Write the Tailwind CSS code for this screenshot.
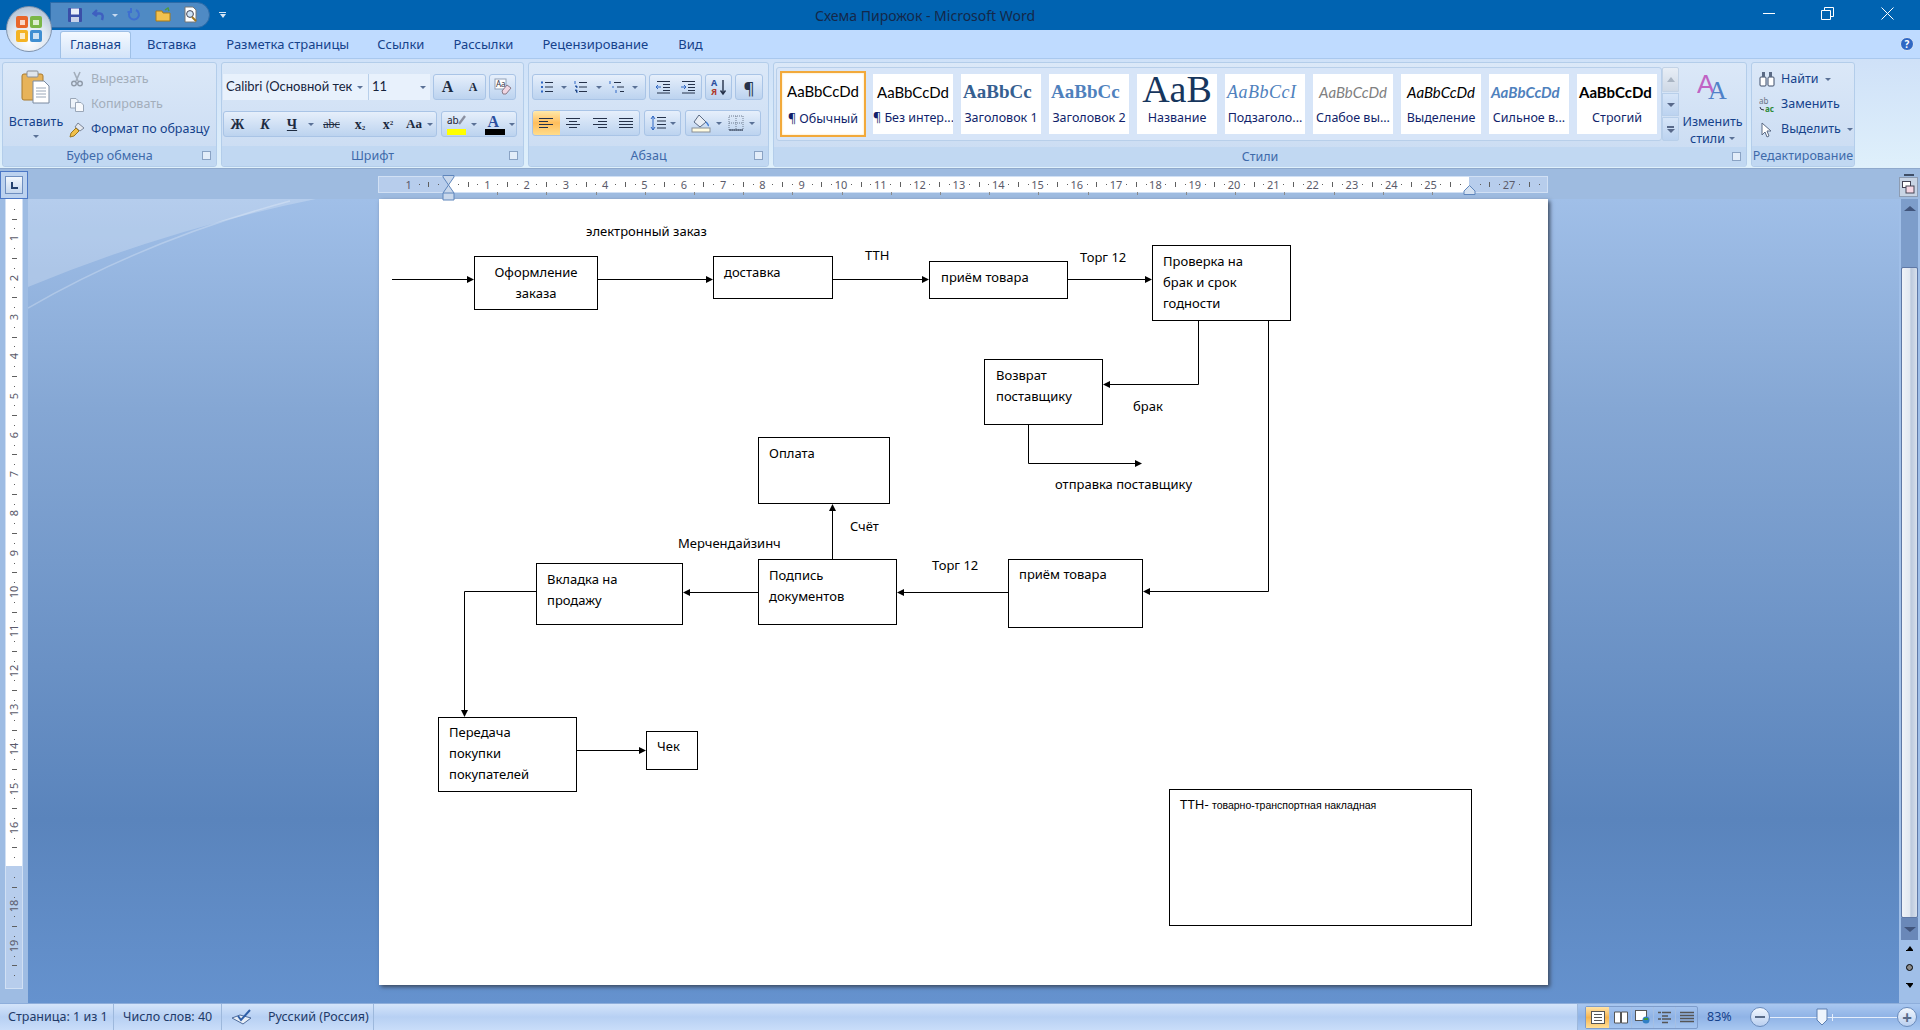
<!DOCTYPE html>
<html lang="ru">
<head>
  <title>Схема Пирожок - Microsoft Word</title>
  <meta charset="UTF-8" />
  <script src="https://cdn.jsdelivr.net/npm/@tailwindcss/browser@4"></script>
</head>
<body class="w-[1920px] h-[1030px] overflow-hidden font-['Noto_Sans',sans-serif] text-[12.5px] text-[#15428b] bg-[#bfdbff]">

  <!-- Office button -->
  <div class="absolute left-[6px] top-[6px] w-[46px] h-[46px] rounded-full border border-[#7f93ad] bg-[radial-gradient(circle_at_50%_75%,#ffffff_0,#dfe8f2_45%,#9fb1c6_100%)] flex items-center justify-center z-10">
    <svg width="30" height="30" viewBox="0 0 30 30">
      <rect x="2" y="2" width="12" height="12" rx="2" fill="#e8662a"/><rect x="16" y="2" width="12" height="12" rx="2" fill="#7ab648"/>
      <rect x="2" y="16" width="12" height="12" rx="2" fill="#f4b323"/><rect x="16" y="16" width="12" height="12" rx="2" fill="#3f8fd2"/>
      <rect x="6" y="6" width="5" height="5" fill="#fff" opacity=".75"/><rect x="19" y="6" width="6" height="5" fill="#fff" opacity=".75"/>
      <rect x="6" y="19" width="5" height="6" fill="#fff" opacity=".75"/><rect x="19" y="19" width="6" height="6" fill="#fff" opacity=".75"/>
    </svg>
  </div>

  <!-- Title bar -->
  <div class="h-[30px] bg-[#0063b1] flex items-start">
    <div class="ml-[50px] mt-[2px] w-[160px] h-[26px] rounded-r-[13px] bg-[#4f8ac4] border border-[#2d6ba8] flex items-center pl-[16px] gap-[9px]">
      <svg width="16" height="16" viewBox="0 0 16 16"><rect x="1" y="1" width="14" height="14" rx="1" fill="#3a4fa8"/><rect x="4" y="1.5" width="8" height="6" fill="#e9eef8"/><rect x="4" y="10" width="8" height="5" fill="#c8d2e8"/></svg>
      <svg width="14" height="16" viewBox="0 0 14 16"><path d="M5 3 L1.5 6.5 L5 9 M2 6.5 H8 Q12 7 10 13" fill="none" stroke="#3e5fc0" stroke-width="2.4"/></svg>
      <span class="w-0 h-0 border-x-[3px] border-x-transparent border-t-[3px] border-t-[#c6d9ef] -ml-[3px]"></span>
      <svg width="14" height="16" viewBox="0 0 14 16"><path d="M9 3 A5 5 0 1 1 4 3.5 M4 1 V5 H0.5" fill="none" stroke="#3e6fd0" stroke-width="2"/></svg>
      <svg class="ml-[5px]" width="18" height="16" viewBox="0 0 18 16"><path d="M1 4 H7 L8 6 H15 V14 H1Z" fill="#f2c24f" stroke="#a87a1b"/><path d="M10 3 L13 1 L14 4" fill="none" stroke="#4f9a3c" stroke-width="1.4"/></svg>
      <svg class="ml-[1px]" width="16" height="18" viewBox="0 0 16 18"><path d="M2 1 H10 L13 4 V16 H2Z" fill="#fff" stroke="#777"/><circle cx="7" cy="8" r="3.4" fill="#cfe4f7" stroke="#445"/><path d="M9 11 L13 15" stroke="#a0761c" stroke-width="2"/></svg>
    </div>
    <div class="ml-[9px] mt-[12px] flex flex-col items-center gap-[1px]">
      <span class="w-[7px] h-px bg-[#d8e6f5]"></span>
      <span class="w-0 h-0 border-x-[3.5px] border-x-transparent border-t-[4px] border-t-[#d8e6f5]"></span>
    </div>
    <div class="ml-[589px] mt-[5px] text-[14px] leading-[22px] text-[#14284a] whitespace-nowrap">Схема Пирожок - Microsoft Word</div>
    <div class="ml-auto flex items-center h-[26px] text-white">
      <svg class="mr-[46px]" width="12" height="12" viewBox="0 0 12 12"><path d="M0 6.5 H12" stroke="#fff"/></svg>
      <svg class="mr-[47px]" width="13" height="13" viewBox="0 0 13 13"><path d="M.5 3.5 H9.5 V12.5 H.5Z M3.5 3.5 V.5 H12.5 V9.5 H9.5" fill="none" stroke="#fff"/></svg>
      <svg class="mr-[26px]" width="13" height="13" viewBox="0 0 13 13"><path d="M.5 .5 L12.5 12.5 M12.5 .5 L.5 12.5" stroke="#fff"/></svg>
    </div>
  </div>

  <!-- Tabs -->
  <div class="h-[28px] bg-[#bfdbff] flex items-end relative">
    <div class="ml-[60px] w-[71px] h-[27px] rounded-t-[3px] border border-b-0 border-[#9fc0e6] bg-linear-to-b from-[#f4f9ff] to-[#d3e4f9] flex items-center justify-center text-[13px]">Главная</div>
    <div class="ml-[16px] h-[27px] leading-[27px] text-[13px]">Вставка</div>
    <div class="ml-[30px] h-[27px] leading-[27px] text-[13px]">Разметка страницы</div>
    <div class="ml-[28px] h-[27px] leading-[27px] text-[13px]">Ссылки</div>
    <div class="ml-[29px] h-[27px] leading-[27px] text-[13px]">Рассылки</div>
    <div class="ml-[29px] h-[27px] leading-[27px] text-[13px]">Рецензирование</div>
    <div class="ml-[30px] h-[27px] leading-[27px] text-[13px]">Вид</div>
    <div class="ml-auto mr-[6px] mb-[7px] w-[14px] h-[14px] rounded-full bg-[#2f67c4] border border-[#d9e6f6] text-white text-[10px] leading-[12px] font-bold text-center">?</div>
  </div>

  <!-- Ribbon -->
  <div class="h-[110px] pt-[3px] pl-[2px] flex items-start gap-[4px] bg-linear-to-b from-[#cfe1f8] to-[#dff0fb] border-t border-[#a9c8ee]">

    <!-- Clipboard -->
    <div class="w-[215px] h-[105px] rounded-[3px] border border-[#b3cdea] flex flex-col bg-linear-to-b from-[#dbe8f8] to-[#c9dbf2]">
      <div class="h-[84px] flex">
        <div class="w-[66px] flex flex-col items-center pt-[7px]">
          <svg width="30" height="34" viewBox="0 0 30 34">
            <rect x="1" y="4" width="21" height="26" rx="2" fill="#e7b35a" stroke="#a97a2c"/>
            <rect x="6" y="1" width="11" height="6" rx="1" fill="#dfe5ec" stroke="#8a8f96"/>
            <path d="M12 11 H23 L28 16 V33 H12Z" fill="#fff" stroke="#7a8aa0"/>
            <path d="M15 18 H25 M15 21 H25 M15 24 H25 M15 27 H25" stroke="#9aa7b8"/>
          </svg>
          <div class="mt-[9px] leading-[18px]">Вставить</div>
          <span class="mt-[4px] w-0 h-0 border-x-[3px] border-x-transparent border-t-[3px] border-t-[#5a7196]"></span>
        </div>
        <div class="flex flex-col pt-[3px]">
          <div class="h-[26px] flex items-center gap-[6px] text-[#a3aebb]">
            <svg width="16" height="16" viewBox="0 0 16 16"><path d="M5 1 L9 10 M11 1 L7 10" stroke="#a3aebb" stroke-width="1.6"/><circle cx="5" cy="12.5" r="2.3" fill="none" stroke="#8f9aa8" stroke-width="1.4"/><circle cx="11" cy="12.5" r="2.3" fill="none" stroke="#8f9aa8" stroke-width="1.4"/></svg>Вырезать
          </div>
          <div class="h-[25px] flex items-center gap-[6px] text-[#a3aebb]">
            <svg width="16" height="16" viewBox="0 0 16 16"><path d="M1.5 1.5 H7 L9 3.5 V11 H1.5Z" fill="#eef3f9" stroke="#9aa7b8"/><path d="M6.5 5.5 H12 L14.5 8 V14.5 H6.5Z" fill="#f7f9fc" stroke="#9aa7b8"/></svg>Копировать
          </div>
          <div class="h-[25px] flex items-center gap-[6px] whitespace-nowrap">
            <svg width="16" height="16" viewBox="0 0 16 16"><path d="M9 1 L15 6 L11 9 L6 5Z" fill="#e3e7ee" stroke="#7b8698"/><path d="M7 6 L2 11 L1 15 L5 14 L10 9Z" fill="#f0c04a" stroke="#9a7621"/></svg>Формат по образцу
          </div>
        </div>
      </div>
      <div class="h-[20px] relative bg-[#c1d8f2] rounded-b-[3px] text-center text-[#3e6aaa] leading-[20px]">Буфер обмена
        <span class="absolute right-[5px] top-[5px] w-[9px] h-[9px] border border-[#8aa3c4] bg-[#e3edf9]"></span>
      </div>
    </div>

    <!-- Font -->
    <div class="w-[303px] h-[105px] rounded-[3px] border border-[#b3cdea] flex flex-col bg-linear-to-b from-[#dbe8f8] to-[#c9dbf2]">
      <div class="h-[84px] pl-[1px] pt-[11px] flex flex-col gap-[11px]">
        <div class="flex h-[26px] items-stretch">
          <div class="w-[146px] bg-[#e8f1fc] border-r border-[#b8cfea] pl-[3px] flex items-center justify-between pr-[5px] text-[#16243c] font-['Lato'] text-[13px] whitespace-nowrap overflow-hidden">Calibri (Основной тек<span class="w-0 h-0 shrink-0 border-x-[3px] border-x-transparent border-t-[3px] border-t-[#5a7196]"></span></div>
          <div class="w-[61px] bg-[#e8f1fc] pl-[3px] pr-[4px] flex items-center justify-between text-[#16243c] font-['Lato'] text-[13px]">11<span class="w-0 h-0 border-x-[3px] border-x-transparent border-t-[3px] border-t-[#5a7196]"></span></div>
          <div class="ml-[3px] w-[53px] rounded-[3px] border border-[#a9c4e6] bg-linear-to-b from-[#e6effb] to-[#bcd3ef] flex items-center justify-around font-['Liberation_Serif'] font-bold text-[#1d2b40]"><span class="text-[16px]">A</span><span class="text-[12px]">A</span></div>
          <div class="ml-[3px] w-[27px] rounded-[3px] border border-[#a9c4e6] bg-linear-to-b from-[#e6effb] to-[#bcd3ef] flex items-center justify-center">
            <svg width="18" height="18" viewBox="0 0 18 18"><rect x="1" y="1" width="11" height="10" fill="#fff" stroke="#8fa0b8"/><text x="2" y="9" font-size="8" fill="#334">Aa</text><path d="M8 13 L13 7 L17 10 L12 16 H9Z" fill="#f2d6e2" stroke="#8a7a88"/></svg>
          </div>
        </div>
        <div class="flex h-[26px]">
          <div class="w-[214px] rounded-[3px] border border-[#a9c4e6] bg-linear-to-b from-[#e6effb] to-[#bcd3ef] flex items-center text-[#1d2b40] font-['Liberation_Serif'] font-bold text-[14px]">
            <span class="w-[27px] text-center">Ж</span><span class="w-[28px] text-center italic">К</span><span class="w-[26px] text-center underline">Ч</span>
            <span class="w-[12px] flex justify-center"><span class="w-0 h-0 border-x-[3px] border-x-transparent border-t-[3px] border-t-[#5a7196]"></span></span>
            <span class="w-[29px] text-center text-[12px] font-normal line-through">abc</span>
            <span class="w-[28px] text-center">x<sub class="text-[7px]">2</sub></span><span class="w-[28px] text-center">x<sup class="text-[7px]">2</sup></span>
            <span class="w-[24px] text-center text-[13px]">Aa</span>
            <span class="w-[8px] flex justify-center"><span class="w-0 h-0 border-x-[3px] border-x-transparent border-t-[3px] border-t-[#5a7196]"></span></span>
          </div>
          <div class="ml-[4px] w-[76px] rounded-[3px] border border-[#a9c4e6] bg-linear-to-b from-[#e6effb] to-[#bcd3ef] flex items-center pl-[4px]">
            <svg width="22" height="23" viewBox="0 0 22 23"><text x="1" y="11" font-size="10" fill="#223">ab</text><path d="M13 11 L19 3" stroke="#8a8fa0" stroke-width="2.4"/><rect x="1" y="16" width="19" height="6" fill="#ffff00"/></svg>
            <span class="ml-[3px] w-0 h-0 border-x-[3px] border-x-transparent border-t-[3px] border-t-[#5a7196]"></span>
            <svg class="ml-[7px]" width="22" height="23" viewBox="0 0 22 23"><text x="3.5" y="14" font-size="16" font-weight="700" fill="#2b4f9e" font-family="Liberation Serif">A</text><rect x="1" y="16" width="20" height="6" fill="#000"/></svg>
            <span class="ml-[3px] w-0 h-0 border-x-[3px] border-x-transparent border-t-[3px] border-t-[#5a7196]"></span>
          </div>
        </div>
      </div>
      <div class="h-[20px] relative bg-[#c1d8f2] rounded-b-[3px] text-center text-[#3e6aaa] leading-[20px]">Шрифт
        <span class="absolute right-[5px] top-[5px] w-[9px] h-[9px] border border-[#8aa3c4] bg-[#e3edf9]"></span>
      </div>
    </div>

    <!-- Paragraph -->
    <div class="w-[241px] h-[105px] rounded-[3px] border border-[#b3cdea] flex flex-col bg-linear-to-b from-[#dbe8f8] to-[#c9dbf2]">
      <div class="h-[84px] pl-[3px] pt-[11px] flex flex-col gap-[10px]">
        <div class="flex h-[26px] gap-[3px]">
          <div class="w-[114px] rounded-[3px] border border-[#a9c4e6] bg-linear-to-b from-[#e6effb] to-[#bcd3ef] flex items-center justify-around px-[3px]">
            <svg width="14" height="14" viewBox="0 0 14 14"><path d="M5 2.5 H13 M5 7 H13 M5 11.5 H13" stroke="#25324a"/><path d="M1 2.5 H3 M1 7 H3 M1 11.5 H3" stroke="#2f67c4" stroke-width="2"/></svg>
            <span class="w-0 h-0 border-x-[3px] border-x-transparent border-t-[3px] border-t-[#5a7196]"></span>
            <svg width="14" height="14" viewBox="0 0 14 14"><path d="M5 2.5 H13 M5 7 H13 M5 11.5 H13" stroke="#25324a"/><path d="M1 1 V4 M1 6 H3 V8 M1 10 H3 V13" stroke="#2f67c4"/></svg>
            <span class="w-0 h-0 border-x-[3px] border-x-transparent border-t-[3px] border-t-[#5a7196]"></span>
            <svg width="16" height="14" viewBox="0 0 16 14"><path d="M5 2.5 H12 M8 7 H15 M11 11.5 H15" stroke="#25324a"/><path d="M1 1 V4 M4 6 V8 M7 10 V13" stroke="#2f67c4"/></svg>
            <span class="w-0 h-0 border-x-[3px] border-x-transparent border-t-[3px] border-t-[#5a7196]"></span>
          </div>
          <div class="w-[53px] rounded-[3px] border border-[#a9c4e6] bg-linear-to-b from-[#e6effb] to-[#bcd3ef] flex items-center justify-around">
            <svg width="16" height="14" viewBox="0 0 16 14"><path d="M2 1.5 H15 M8 4.5 H15 M8 7.5 H15 M8 10.5 H15 M2 13 H15" stroke="#25324a"/><path d="M6 7 H1 M3 5 L1 7 L3 9" fill="none" stroke="#2f67c4"/></svg>
            <svg width="16" height="14" viewBox="0 0 16 14"><path d="M2 1.5 H15 M8 4.5 H15 M8 7.5 H15 M8 10.5 H15 M2 13 H15" stroke="#25324a"/><path d="M1 7 H6 M4 5 L6 7 L4 9" fill="none" stroke="#2f67c4"/></svg>
          </div>
          <div class="w-[27px] rounded-[3px] border border-[#a9c4e6] bg-linear-to-b from-[#e6effb] to-[#bcd3ef] flex items-center justify-center">
            <svg width="18" height="18" viewBox="0 0 18 18"><text x="1" y="8" font-size="9" font-weight="700" fill="#2b4f9e">А</text><text x="1" y="17" font-size="9" font-weight="700" fill="#b03a2e">Я</text><path d="M13 2 V15 M10.5 12.5 L13 16 L15.5 12.5" fill="none" stroke="#25324a" stroke-width="1.4"/></svg>
          </div>
          <div class="w-[28px] rounded-[3px] border border-[#a9c4e6] bg-linear-to-b from-[#e6effb] to-[#bcd3ef] flex items-center justify-center text-[17px] leading-none text-[#25324a]">¶</div>
        </div>
        <div class="flex h-[26px] gap-[4px]">
          <div class="w-[108px] rounded-[3px] border border-[#a9c4e6] bg-linear-to-b from-[#e6effb] to-[#bcd3ef] flex items-stretch">
            <div class="w-[27px] rounded-l-[3px] bg-linear-to-b from-[#ffe9a8] via-[#ffbe5c] to-[#ffdc8a] flex items-center justify-center"><svg width="14" height="13" viewBox="0 0 14 13"><path d="M0 1.5 H14 M0 4.5 H9 M0 7.5 H14 M0 10.5 H9" stroke="#25324a"/></svg></div>
            <div class="w-[27px] flex items-center justify-center"><svg width="14" height="13" viewBox="0 0 14 13"><path d="M0 1.5 H14 M3 4.5 H11 M0 7.5 H14 M3 10.5 H11" stroke="#25324a"/></svg></div>
            <div class="w-[27px] flex items-center justify-center"><svg width="14" height="13" viewBox="0 0 14 13"><path d="M0 1.5 H14 M5 4.5 H14 M0 7.5 H14 M5 10.5 H14" stroke="#25324a"/></svg></div>
            <div class="w-[26px] flex items-center justify-center"><svg width="14" height="13" viewBox="0 0 14 13"><path d="M0 1.5 H14 M0 4.5 H14 M0 7.5 H14 M0 10.5 H14" stroke="#25324a"/></svg></div>
          </div>
          <div class="w-[37px] rounded-[3px] border border-[#a9c4e6] bg-linear-to-b from-[#e6effb] to-[#bcd3ef] flex items-center justify-center gap-[3px]">
            <svg width="17" height="16" viewBox="0 0 17 16"><path d="M7 2.5 H16 M7 6 H16 M7 9.5 H16 M7 13 H16" stroke="#25324a"/><path d="M3 1 V15 M1 4 L3 1 L5 4 M1 12 L3 15 L5 12" fill="none" stroke="#2f67c4"/></svg>
            <span class="w-0 h-0 border-x-[3px] border-x-transparent border-t-[3px] border-t-[#5a7196]"></span>
          </div>
          <div class="w-[76px] rounded-[3px] border border-[#a9c4e6] bg-linear-to-b from-[#e6effb] to-[#bcd3ef] flex items-center justify-around px-[2px]">
            <svg width="20" height="20" viewBox="0 0 20 20"><path d="M8 2 L15 9 L9 14 L3 9Z" fill="#e9eef5" stroke="#5a6a84"/><path d="M15 9 Q18 12 17 13" fill="none" stroke="#3e79d0" stroke-width="1.5"/><rect x="1" y="15" width="18" height="4" fill="#fffbe0" stroke="#8a8f96"/></svg>
            <span class="w-0 h-0 border-x-[3px] border-x-transparent border-t-[3px] border-t-[#5a7196]"></span>
            <svg width="16" height="16" viewBox="0 0 16 16"><path d="M1 1 H15 V15 H1Z M8 1 V15 M1 8 H15" fill="none" stroke="#6f7c90" stroke-dasharray="1 1"/><path d="M1 15 H15" stroke="#25324a"/></svg>
            <span class="w-0 h-0 border-x-[3px] border-x-transparent border-t-[3px] border-t-[#5a7196]"></span>
          </div>
        </div>
      </div>
      <div class="h-[20px] relative bg-[#c1d8f2] rounded-b-[3px] text-center text-[#3e6aaa] leading-[20px]">Абзац
        <span class="absolute right-[5px] top-[5px] w-[9px] h-[9px] border border-[#8aa3c4] bg-[#e3edf9]"></span>
      </div>
    </div>

    <!-- Styles -->
    <div class="w-[974px] h-[105px] rounded-[3px] border border-[#b3cdea] flex flex-col bg-linear-to-b from-[#dbe8f8] to-[#c9dbf2]">
      <div class="h-[84px] flex pl-[2px] pt-[4px]">
        <div class="w-[886px] h-[74px] flex gap-[8px] rounded-[3px] border border-[#b8cfea] bg-[#d7e5f8] pl-[3px] pt-[6px] text-center leading-[16px] text-[#111f6b] text-[12.5px] whitespace-nowrap">
          <div class="w-[86px] h-[66px] -mt-[3px] -mr-[3px] bg-white border-2 border-[#f2a93b] shadow-[inset_0_0_2px_#ffd98a] flex flex-col overflow-hidden">
            <span class="h-[38px] leading-[36px] text-black font-['Lato'] text-[15px]">AaBbCcDd</span><span>¶ Обычный</span>
          </div>
          <div class="w-[80px] h-[60px] ml-[2px] bg-white flex flex-col overflow-hidden">
            <span class="h-[36px] leading-[36px] text-black font-['Lato'] text-[15px]">AaBbCcDd</span><span>¶ Без интер...</span>
          </div>
          <div class="w-[80px] h-[60px] bg-white flex flex-col overflow-hidden">
            <span class="h-[36px] leading-[36px] text-left pl-[2px] text-[#365f91] font-['Liberation_Serif'] font-bold text-[19px]">AaBbCc</span><span>Заголовок 1</span>
          </div>
          <div class="w-[80px] h-[60px] bg-white flex flex-col overflow-hidden">
            <span class="h-[36px] leading-[36px] text-left pl-[2px] text-[#4f81bd] font-['Liberation_Serif'] font-bold text-[19px]">AaBbCc</span><span>Заголовок 2</span>
          </div>
          <div class="w-[80px] h-[60px] bg-white flex flex-col overflow-hidden">
            <span class="h-[36px] leading-[30px] text-[#17365d] font-['Liberation_Serif'] text-[38px]">AaB</span><span>Название</span>
          </div>
          <div class="w-[80px] h-[60px] bg-white flex flex-col overflow-hidden">
            <span class="h-[36px] leading-[36px] text-left pl-[2px] text-[#4f81bd] font-['Liberation_Serif'] italic text-[18px] tracking-[.5px]">AaBbCcI</span><span>Подзаголо...</span>
          </div>
          <div class="w-[80px] h-[60px] bg-white flex flex-col overflow-hidden">
            <span class="h-[36px] leading-[36px] text-[#808080] font-['Lato'] italic text-[15px]">AaBbCcDd</span><span>Слабое вы...</span>
          </div>
          <div class="w-[80px] h-[60px] bg-white flex flex-col overflow-hidden">
            <span class="h-[36px] leading-[36px] text-black font-['Lato'] italic text-[15px]">AaBbCcDd</span><span>Выделение</span>
          </div>
          <div class="w-[80px] h-[60px] bg-white flex flex-col overflow-hidden">
            <span class="h-[36px] leading-[36px] text-left pl-[2px] text-[#4f81bd] font-['Lato'] italic font-bold text-[15px]">AaBbCcDd</span><span>Сильное в...</span>
          </div>
          <div class="w-[80px] h-[60px] bg-white flex flex-col overflow-hidden">
            <span class="h-[36px] leading-[36px] text-left pl-[2px] text-black font-['Lato'] font-bold text-[15px]">AaBbCcDd</span><span>Строгий</span>
          </div>
        </div>
        <div class="w-[17px] h-[74px] flex flex-col gap-[1px]">
          <div class="h-[25px] rounded-t-[2px] border border-[#c3d3e6] bg-linear-to-b from-[#e8eef6] to-[#cfd9e6] flex items-center justify-center"><span class="w-0 h-0 border-x-[4px] border-x-transparent border-b-[5px] border-b-[#a9b4c2]"></span></div>
          <div class="h-[23px] border border-[#b8cfea] bg-linear-to-b from-[#d6e5f8] to-[#bcd3f0] flex items-center justify-center"><span class="w-0 h-0 border-x-[4px] border-x-transparent border-t-[4px] border-t-[#58698a]"></span></div>
          <div class="h-[24px] rounded-b-[2px] border border-[#b8cfea] bg-linear-to-b from-[#d6e5f8] to-[#bcd3f0] flex flex-col gap-[1px] items-center justify-center"><span class="w-[7px] h-[2px] bg-[#58698a]"></span><span class="w-0 h-0 border-x-[4px] border-x-transparent border-t-[4px] border-t-[#58698a]"></span></div>
        </div>
        <div class="flex-1 flex flex-col items-center pt-[4px] leading-[17px]">
          <svg width="32" height="32" viewBox="0 0 32 32">
            <text x="0" y="22" font-size="26" font-family="Liberation Sans" fill="#c063c4">A</text>
            <text x="11" y="28" font-size="26" font-family="Liberation Serif" fill="#4f81c8">A</text>
          </svg>
          <div class="mt-[10px]">Изменить</div>
          <div class="flex items-center gap-[4px]">стили<span class="w-0 h-0 border-x-[3px] border-x-transparent border-t-[3px] border-t-[#5a7196]"></span></div>
        </div>
      </div>
      <div class="h-[20px] relative bg-[#c1d8f2] rounded-b-[3px] text-center text-[#3e6aaa] leading-[20px]">Стили
        <span class="absolute right-[5px] top-[5px] w-[9px] h-[9px] border border-[#8aa3c4] bg-[#e3edf9]"></span>
      </div>
    </div>

    <!-- Editing -->
    <div class="w-[104px] h-[105px] rounded-[3px] border border-[#b3cdea] flex flex-col bg-linear-to-b from-[#dbe8f8] to-[#c9dbf2]">
      <div class="h-[84px] pl-[7px] pt-[3px] flex flex-col">
        <div class="h-[26px] flex items-center gap-[6px] text-[#15428b]">
          <svg width="16" height="16" viewBox="0 0 16 16"><rect x="1" y="6" width="6" height="9" rx="1" fill="#fff" stroke="#3d4d68"/><rect x="9" y="6" width="6" height="9" rx="1" fill="#fff" stroke="#3d4d68"/><rect x="3" y="1" width="3" height="5" fill="#5a6a84"/><rect x="10" y="1" width="3" height="5" fill="#5a6a84"/></svg>Найти
          <span class="w-0 h-0 border-x-[3px] border-x-transparent border-t-[3px] border-t-[#5a7196]"></span>
        </div>
        <div class="h-[25px] flex items-center gap-[6px]">
          <svg width="16" height="16" viewBox="0 0 16 16"><text x="0" y="7" font-size="8" fill="#6a7484">ab</text><text x="6" y="15" font-size="8" font-weight="700" fill="#2e8b3a">ac</text><path d="M1 10 Q1 13 5 13" fill="none" stroke="#334"/></svg>Заменить
        </div>
        <div class="h-[25px] flex items-center gap-[6px]">
          <svg width="16" height="16" viewBox="0 0 16 16"><path d="M3 1 V13 L6 10 L8 15 L10 14 L8 9 H12Z" fill="#fff" stroke="#5a6a84"/></svg>Выделить
          <span class="w-0 h-0 border-x-[3px] border-x-transparent border-t-[3px] border-t-[#5a7196]"></span>
        </div>
      </div>
      <div class="h-[20px] bg-[#c1d8f2] rounded-b-[3px] text-center text-[#3e6aaa] leading-[20px] whitespace-nowrap">Редактирование</div>
    </div>
  </div>

  <!-- Ruler row -->
  <div class="h-[31px] bg-[#9ebbe0] flex items-start border-t border-[#8fa9cc]">
    <div class="w-[28px] h-[28px] mt-[2px] border border-[#4c78c6] bg-[#bcd2ef] flex items-center justify-center">
      <span class="w-[18px] h-[18px] bg-linear-to-b from-[#f4f8fd] to-[#c5d7ee] border border-[#6f8fc0] flex items-center justify-center"><span class="w-[7px] h-[7px] border-l-2 border-b-2 border-[#26426e]"></span></span>
    </div>
    <div id="hruler" class="relative ml-[350px] mt-[7px] w-[1170px] h-[17px] bg-[#b7cdec] border border-[#d1e0f4]">
      <div class="absolute left-[69px] top-0 w-[1021px] h-full bg-white"></div>
      <!-- margin sliders -->
      <svg class="absolute left-[63px] -top-[2px] z-10" width="13" height="26" viewBox="0 0 13 26"><path d="M1 .5 H12 V2 L6.5 10 L1 2Z M6.5 10 L12 18 V25 H1 V18Z" fill="#c9d8ec" stroke="#5f86bc"/><path d="M1 18 H12" stroke="#5f86bc"/></svg>
      <svg class="absolute left-[1084px] top-[8px] z-10" width="13" height="10" viewBox="0 0 13 10"><path d="M6.5 .5 L12 6 V9.5 H1 V6Z" fill="#d5e2f2" stroke="#5f86bc"/></svg>
    </div>
    <div class="ml-auto w-[21px] relative h-full">
      <span class="absolute left-[5px] top-[5px] w-[10px] h-[2px] bg-[#3f4e66]"></span>
      <div class="absolute left-0 top-[8px] w-[19px] h-[20px] bg-[#c8d4e4] border border-[#8d9cb2] flex items-center justify-center">
        <svg width="13" height="13" viewBox="0 0 13 13"><rect x=".5" y=".5" width="8" height="6" fill="#fff" stroke="#445"/><rect x="4" y="5" width="8" height="7" fill="#f6d8e4" stroke="#445"/></svg>
      </div>
    </div>
  </div>

  <!-- Document area -->
  <div class="h-[804px] flex">
    <div class="w-[28px] bg-[#9ebce3] pl-[5px]">
      <div id="vruler" class="relative w-[18px] h-[790px] bg-[#b7cdec] border-x border-b border-[#d1e0f4]">
        <div class="absolute left-0 top-0 w-full h-[667px] bg-white"></div>
      </div>
    </div>

    <div class="relative flex-1 bg-[linear-gradient(180deg,#a0bfe8_0,#85a7d4_210px,#5a84bc_620px,#6592ce_100%)]">
      <svg class="absolute left-0 top-0" width="300" height="120" viewBox="0 0 300 120">
        <path d="M0 88 Q140 30 288 0 H0Z" fill="#fff" fill-opacity=".22"/>
        <path d="M0 109 Q120 40 262 2" fill="none" stroke="#fff" stroke-opacity=".25" stroke-width="1.5"/>
      </svg>

      <!-- Page with the diagram -->
      <div class="absolute left-[351px] top-0 w-[1169px] h-[786px] bg-white shadow-[2px_2px_4px_#3c4a60] text-[13px] leading-[21px] text-black">
        <svg class="absolute inset-0" width="1169" height="786" viewBox="0 0 1169 786">
          <g fill="none" stroke="#000">
            <path d="M13 80.5 H90"/><path d="M219 80.5 H329"/><path d="M454 80.5 H545"/><path d="M689 80.5 H768"/>
            <path d="M819.5 122 V185.5 H729"/><path d="M649.5 226 V264.5 H758"/><path d="M889.5 122 V392.5 H770"/>
            <path d="M629 393.5 H523"/><path d="M379 393.5 H309"/><path d="M157 392.5 H85.5 V513"/><path d="M198 551.5 H262"/>
            <path d="M453.5 360 V310"/>
          </g>
          <g fill="#000">
            <path d="M95 80.5 l-7 -3.5 v7Z"/><path d="M334 80.5 l-7 -3.5 v7Z"/><path d="M550 80.5 l-7 -3.5 v7Z"/><path d="M773 80.5 l-7 -3.5 v7Z"/>
            <path d="M724 185.5 l7 -3.5 v7Z"/><path d="M763 264.5 l-7 -3.5 v7Z"/><path d="M764 392.5 l7 -3.5 v7Z"/>
            <path d="M518 393.5 l7 -3.5 v7Z"/><path d="M304 393.5 l7 -3.5 v7Z"/><path d="M85.5 518 l-3.5 -7 h7Z"/><path d="M267 551.5 l-7 -3.5 v7Z"/>
            <path d="M453.5 305 l-3.5 7 h7Z"/>
          </g>
        </svg>

        <div class="absolute left-[95px] top-[57px] w-[124px] h-[54px] border border-black pt-[5px] text-center">Оформление<br>заказа</div>
        <div class="absolute left-[334px] top-[57px] w-[120px] h-[43px] border border-black pt-[5px] pl-[10px]">доставка</div>
        <div class="absolute left-[550px] top-[62px] w-[139px] h-[38px] border border-black pt-[5px] pl-[11px]">приём товара</div>
        <div class="absolute left-[773px] top-[46px] w-[139px] h-[76px] border border-black pt-[5px] pl-[10px]">Проверка на<br>брак и срок<br>годности</div>
        <div class="absolute left-[605px] top-[160px] w-[119px] h-[66px] border border-black pt-[5px] pl-[11px]">Возврат<br>поставщику</div>
        <div class="absolute left-[379px] top-[238px] w-[132px] h-[67px] border border-black pt-[5px] pl-[10px]">Оплата</div>
        <div class="absolute left-[379px] top-[360px] w-[139px] h-[66px] border border-black pt-[5px] pl-[10px]">Подпись<br>документов</div>
        <div class="absolute left-[629px] top-[360px] w-[135px] h-[69px] border border-black pt-[4px] pl-[10px]">приём товара</div>
        <div class="absolute left-[157px] top-[364px] w-[147px] h-[62px] border border-black pt-[5px] pl-[10px]">Вкладка на<br>продажу</div>
        <div class="absolute left-[59px] top-[518px] w-[139px] h-[75px] border border-black pt-[4px] pl-[10px]">Передача<br>покупки<br>покупателей</div>
        <div class="absolute left-[267px] top-[532px] w-[52px] h-[39px] border border-black pt-[4px] pl-[10px]">Чек</div>
        <div class="absolute left-[790px] top-[590px] w-[303px] h-[137px] border border-black pt-[4px] pl-[10px]">ТТН- <span class="font-['Liberation_Sans'] text-[10.5px]">товарно-транспортная накладная</span></div>

        <span class="absolute left-[207px] top-[22px]">электронный заказ</span>
        <span class="absolute left-[486px] top-[46px]">ТТН</span>
        <span class="absolute left-[701px] top-[48px]">Торг 12</span>
        <span class="absolute left-[754px] top-[197px]">брак</span>
        <span class="absolute left-[676px] top-[275px]">отправка поставщику</span>
        <span class="absolute left-[471px] top-[317px]">Счёт</span>
        <span class="absolute left-[299px] top-[334px]">Мерчендайзинч</span>
        <span class="absolute left-[553px] top-[356px]">Торг 12</span>
      </div>
    </div>

    <!-- Scrollbar -->
    <div class="w-[21px] bg-[#a0bfe8] flex flex-col items-center">
      <div class="w-[17px] h-[719px] bg-[#7d9dca] flex flex-col items-center">
        <span class="mt-[7px] w-0 h-0 border-x-[6px] border-x-transparent border-b-[5px] border-b-[#41557c]"></span>
        <div class="mt-[56px] w-[17px] h-[651px] rounded-[2px] border border-[#5f78a5] bg-[linear-gradient(90deg,#f0f3f8,#e2e8f1_50%,#bcc9dc_60%,#d8e0ec)]"></div>
      </div>
      <div class="w-[17px] h-[22px] bg-[#6a88b8] flex items-center justify-center"><span class="w-0 h-0 border-x-[6px] border-x-transparent border-t-[5px] border-t-[#41557c]"></span></div>
      <div class="mt-[6px] h-[10px] flex flex-col items-center"><span class="w-0 h-0 border-x-[3px] border-x-transparent border-b-[4px] border-b-black"></span><span class="w-[7px] h-[1px] bg-black"></span></div>
      <span class="mt-[8px] w-[7px] h-[7px] rounded-full bg-[#8d8d8d] border border-black"></span>
      <div class="mt-[12px] h-[10px] flex flex-col items-center"><span class="w-[7px] h-[1px] bg-black"></span><span class="w-0 h-0 border-x-[3px] border-x-transparent border-t-[4px] border-t-black"></span></div>
    </div>
  </div>

  <!-- Status bar -->
  <div class="h-[27px] flex items-stretch border-t border-[#8eaedb] bg-[linear-gradient(180deg,#d4e4fa,#b7d0f3_50%,#c9ddf9)] text-[#1f3a68] text-[12.5px] leading-[26px]">
    <div class="w-[114px] pl-[8px] border-r border-[#9db8dc]">Страница: 1 из 1</div>
    <div class="w-[108px] pl-[9px] border-r border-[#9db8dc]">Число слов: 40</div>
    <div class="w-[152px] pl-[9px] flex items-center gap-[15px] border-r border-[#9db8dc]">
      <svg width="22" height="17" viewBox="0 0 22 17"><path d="M1 9 L9 6 L20 9 L12 15 Z" fill="#e8eef6" stroke="#4e6c9c"/><path d="M7 7 L10 11 L19 1" fill="none" stroke="#2f5fa8" stroke-width="2"/></svg>
      <span>Русский (Россия)</span>
    </div>
    <div class="w-[1204px] border-r border-[#9db8dc]"></div>
    <div class="flex-1 flex items-center bg-[linear-gradient(180deg,#a9c7f0,#8fb3e6_50%,#a9c8f1)] pl-[7px]">
      <div class="w-[113px] h-[23px] flex rounded-[2px] border border-[#7d9ccb]">
        <div class="w-[23px] bg-linear-to-b from-[#ffe3a6] via-[#f7b54f] to-[#ffdf96] flex items-center justify-center"><svg width="14" height="13" viewBox="0 0 14 13"><rect x=".5" y=".5" width="13" height="12" fill="#fff" stroke="#555"/><path d="M3 3.5 H11 M3 6.5 H11 M3 9.5 H11" stroke="#555"/></svg></div>
        <div class="w-[22px] flex items-center justify-center border-l border-[#a5bfe3]"><svg width="14" height="13" viewBox="0 0 14 13"><path d="M.5 1 H6.5 V12 H.5Z M7.5 1 H13.5 V12 H7.5Z" fill="#fff" stroke="#555"/></svg></div>
        <div class="w-[22px] flex items-center justify-center border-l border-[#a5bfe3]"><svg width="15" height="14" viewBox="0 0 15 14"><rect x=".5" y=".5" width="11" height="10" fill="#fff" stroke="#555"/><circle cx="11" cy="10" r="3.5" fill="#2f7fc4"/><path d="M9 9 H13" stroke="#3e9a3c" stroke-width="2"/></svg></div>
        <div class="w-[22px] flex items-center justify-center border-l border-[#a5bfe3]"><svg width="14" height="13" viewBox="0 0 14 13"><path d="M0 1.5 H3 M4 1.5 H13 M4 5 H10 M0 8 H3 M4 8 H13 M4 11.5 H10" stroke="#555" stroke-width="1.4"/></svg></div>
        <div class="w-[22px] flex items-center justify-center border-l border-[#a5bfe3]"><svg width="14" height="13" viewBox="0 0 14 13"><path d="M0 1.5 H14 M0 4.5 H14 M0 7.5 H14 M0 10.5 H14" stroke="#555" stroke-width="1.4"/></svg></div>
      </div>
      <span class="ml-[9px] w-[27px] text-[#15428b]">83%</span>
      <div class="ml-[16px] w-[20px] h-[20px] rounded-full border border-[#6b8cbc] bg-linear-to-b from-[#f2f7fd] to-[#b9cff0] flex items-center justify-center"><span class="w-[10px] h-[2px] bg-[#5a6c88]"></span></div>
      <div class="relative w-[127px] h-px bg-[#e5eefb]">
        <span class="absolute left-[62px] -top-[3px] h-[7px] w-px bg-[#e5eefb]"></span>
        <svg class="absolute left-[46px] -top-[9px]" width="12" height="18" viewBox="0 0 12 18"><path d="M1 1 H11 V12 L6 17 L1 12Z" fill="#eef4fc" stroke="#5d7fb0"/></svg>
      </div>
      <div class="w-[20px] h-[20px] rounded-full border border-[#6b8cbc] bg-linear-to-b from-[#f2f7fd] to-[#b9cff0] flex items-center justify-center text-[17px] leading-none font-bold text-[#5a6c88]">+</div>
    </div>
  </div>

  <script>
    // ruler ticks and numbers, step is one cm at 83% zoom
    const cm = 39.3;
    const hr = document.getElementById("hruler");
    const vr = document.getElementById("vruler");

    function hmark(x, cls, text) {
      const el = document.createElement("span");
      el.className = cls;
      el.style.left = x + "px";
      if (text) el.textContent = text;
      hr.appendChild(el);
    }
    function vmark(y, cls, text) {
      const el = document.createElement("span");
      el.className = cls;
      el.style.top = y + "px";
      if (text) el.textContent = text;
      vr.appendChild(el);
    }

    const h0 = 69;
    for (let i = -1; i < 28; i++) {
      const x = h0 + i * cm;
      [0.25, 0.5, 0.75].forEach((f) => {
        if (x + f * cm < 1 || x + f * cm > 1166) return;
        const cls = f === 0.5
          ? "absolute top-[5px] w-px h-[5px] bg-[#5f5f5f]"
          : "absolute top-[7px] w-px h-px bg-[#5f5f5f]";
        hmark(x + f * cm, cls);
      });
      if (i !== 0 && i !== 26 && i !== 28) {
        hmark(x - 8, "absolute top-0 w-4 text-center text-[11px] leading-[15px] text-[#5a5a6a]", String(Math.abs(i)));
      }
    }
    // default tab stops below the ruler
    for (let i = 1; i < 21; i++) {
      hmark(h0 + i * 49.2, "absolute top-[15px] w-px h-[3px] bg-[#8a8a8a]");
    }

    for (let i = 0; i < 20; i++) {
      const y = i * cm;
      [0.25, 0.5, 0.75].forEach((f) => {
        const cls = f === 0.5
          ? "absolute left-[6px] w-[5px] h-px bg-[#5f5f5f]"
          : "absolute left-[8px] w-px h-px bg-[#5f5f5f]";
        vmark(y + f * cm, cls);
      });
      if (i !== 0 && i !== 17) {
        vmark(y - 8, "absolute left-0 w-4 h-4 -rotate-90 text-center text-[11px] leading-4 text-[#5a5a6a]", String(i));
      }
    }
  </script>
</body>
</html>
